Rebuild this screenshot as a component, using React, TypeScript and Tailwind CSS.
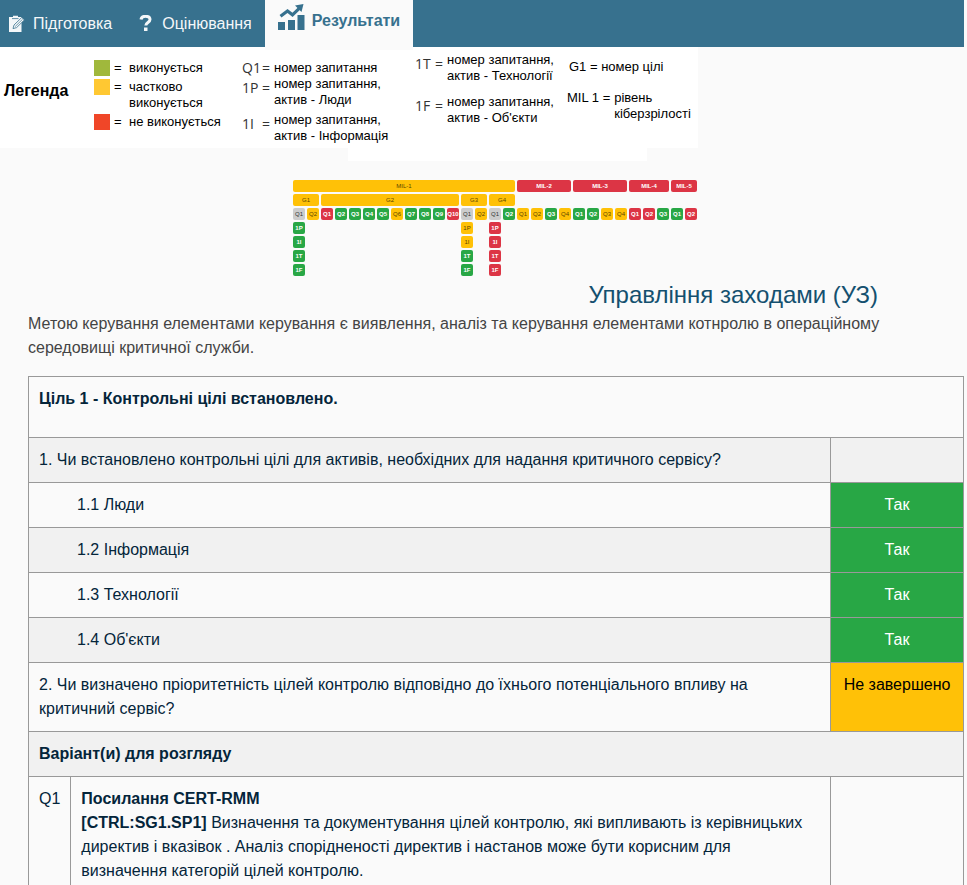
import { Fragment } from "react";

type Tone = "g" | "y" | "r" | "n";

const tones: Record<Tone, string> = {
  g: "bg-[#28a745] text-white font-bold",
  y: "bg-[#ffc107] text-[#5a4500]",
  r: "bg-[#dc3545] text-white font-bold",
  n: "bg-[#cccccc] text-[#333333]",
};

type Question = { label: string; tone: Tone; parts?: Tone[] };
type Level = { label: string; tone: Tone; goals: { label?: string; questions: Question[] }[] };

const parse = (tonesList: string): Question[] =>
  tonesList.split("").map((t, i) => ({ label: `Q${i + 1}`, tone: t as Tone }));

const withParts = (questions: Question[], parts: string): Question[] => [
  { ...questions[0], parts: parts.split("") as Tone[] },
  ...questions.slice(1),
];

const levels: Level[] = [
  {
    label: "MIL-1",
    tone: "y",
    goals: [
      { label: "G1", questions: withParts(parse("ny"), "gggg") },
      { label: "G2", questions: parse("rggggygggr") },
      { label: "G3", questions: withParts(parse("ny"), "yygg") },
      { label: "G4", questions: withParts(parse("ng"), "rrrr") },
    ],
  },
  { label: "MIL-2", tone: "r", goals: [{ questions: parse("yygy") }] },
  { label: "MIL-3", tone: "r", goals: [{ questions: parse("ggyy") }] },
  { label: "MIL-4", tone: "r", goals: [{ questions: parse("rrg") }] },
  { label: "MIL-5", tone: "r", goals: [{ questions: parse("gr") }] },
];

const partNames = ["1P", "1I", "1T", "1F"];

function Cell({ label, tone, wide = false }: { label: string; tone: Tone; wide?: boolean }) {
  return (
    <div
      className={`flex h-3 items-center justify-center overflow-hidden rounded-xs text-[6px] leading-none ${
        wide ? "w-full" : "w-3"
      } ${tones[tone]}`}
    >
      {label}
    </div>
  );
}

function HeatMap() {
  return (
    <div className="flex gap-0.5">
      {levels.map((level) => (
        <div key={level.label} className="flex flex-col gap-0.5">
          <Cell label={level.label} tone={level.tone} wide />
          <div className="flex gap-0.5">
            {level.goals.map((goal, i) => (
              <div key={i} className="flex flex-col gap-0.5">
                {goal.label ? <Cell label={goal.label} tone="y" wide /> : <div className="h-3" />}
                <div className="flex gap-0.5">
                  {goal.questions.map((q) => (
                    <div key={q.label} className="flex flex-col gap-0.5">
                      <Cell label={q.label} tone={q.tone} />
                      {q.parts?.map((t, p) => <Cell key={p} label={partNames[p]} tone={t} />)}
                    </div>
                  ))}
                </div>
              </div>
            ))}
          </div>
        </div>
      ))}
    </div>
  );
}

function ClipboardIcon() {
  return (
    <svg viewBox="0 0 17 18" className="h-[18px] w-[17px]" aria-hidden="true">
      <path d="M1 2h4V0.800h5V2h3.500v15H1z" fill="#f4f7f9" />
      <path d="M4 3.600h6.500" stroke="#37718e" strokeWidth="0.800" />
      <path d="M5 13.600l1-3.600 7.800-7.600 2.600 2.500-7.800 7.700z" fill="#f4f7f9" stroke="#37718e" strokeWidth="0.800" />
      <path d="M7.200 11.500l7.400-7.300" stroke="#37718e" strokeWidth="0.700" />
    </svg>
  );
}

function ChartIcon() {
  return (
    <svg viewBox="0 0 27 26" className="h-[26px] w-[27px]" aria-hidden="true">
      <path d="M0 18h7v8H0zM10 16h7v10h-7zM19.500 11h7v15h-7z" fill="#37718e" />
      <path d="M2.500 12.200L9.500 7l5 3.800 7-6.600" fill="none" stroke="#37718e" strokeWidth="3.200" />
      <path d="M25.500 0l-2 8-6.500-6.500z" fill="#37718e" />
    </svg>
  );
}

function NavBar() {
  return (
    <nav className="flex h-[47px] items-start bg-[#37718e] text-base text-[#f4f7f9]">
      <a href="#prepare" className="flex h-12 items-center gap-2 pl-2">
        <ClipboardIcon />
        Підготовка
      </a>
      <a href="#assess" className="flex h-12 items-center gap-2.5 pr-[13px] pl-[27px]">
        <svg viewBox="0 0 13 18" className="h-[18px] w-[13px]" aria-hidden="true">
          <path d="M2 4.500C2.300 2.300 4 1.300 6.500 1.300c2.700 0 4.500 1.200 4.500 3.300 0 3-4.200 2.900-4.200 6" fill="none" stroke="#f4f7f9" strokeWidth="3" />
          <path d="M5 12.500h3.500V16H5z" fill="#f4f7f9" />
        </svg>
        Оцінювання
      </a>
      <a
        href="#results"
        aria-current="page"
        className="flex h-[50px] items-start gap-[7px] bg-[#fafafa] px-[13px] pt-1 font-bold text-[#37718e]"
      >
        <ChartIcon />
        <span className="pt-[5px]">Результати</span>
      </a>
    </nav>
  );
}

function Swatches() {
  const rows = [
    { color: "bg-[#a0b83c]", text: "виконується" },
    { color: "bg-[#ffc832]", text: "частково виконується" },
    { color: "bg-[#f04628]", text: "не виконується" },
  ];
  return (
    <ul className="flex h-[101px] w-[148px] flex-col gap-[3px] pt-[13px]">
      {rows.map((r) => (
        <li key={r.text} className="flex items-start">
          <span className={`h-4 w-4 shrink-0 ${r.color}`} />
          <span className="w-[19px] shrink-0 pl-1">=</span>
          <span>{r.text}</span>
        </li>
      ))}
    </ul>
  );
}

function Term({ code, lines }: { code: string; lines: string[] }) {
  return (
    <div className="flex items-start">
      <dt
        className={`flex w-7 shrink-0 justify-between font-['Open_Sans',sans-serif] text-sm leading-4 text-[#333333] ${
          lines.length > 1 ? "pt-1" : ""
        }`}
      >
        <span>{code}</span>
        <span>=</span>
      </dt>
      <dd className="pl-1 whitespace-nowrap">
        {lines.map((l) => (
          <Fragment key={l}>
            {l}
            <br />
          </Fragment>
        ))}
      </dd>
    </div>
  );
}

function Legend() {
  return (
    <section className="flex w-[698px] bg-white text-[13px] leading-4 text-black">
      <h2 className="w-[94px] pt-[34px] pl-1 text-base leading-5 font-bold">Легенда</h2>
      <Swatches />
      <dl className="w-[173px] pt-[13px]">
        <Term code="Q1" lines={["номер запитання"]} />
        <Term code="1P" lines={["номер запитання,", "актив - Люди"]} />
        <div className="h-1" />
        <Term code="1I" lines={["номер запитання,", "актив - Інформація"]} />
      </dl>
      <dl className="flex w-[152px] flex-col gap-2.5 pt-[5px]">
        <Term code="1T" lines={["номер запитання,", "актив - Технології"]} />
        <Term code="1F" lines={["номер запитання,", "актив - Об'єкти"]} />
      </dl>
      <div className="pt-3 whitespace-nowrap">
        <p className="pl-0.5">G1 = номер цілі</p>
        <div className="flex gap-1 pt-[15px]">
          <span>MIL 1 =</span>
          <span>
            рівень
            <br />
            кіберзрілості
          </span>
        </div>
      </div>
    </section>
  );
}

const cell = "border border-[#999999] px-2.5 py-2.5 align-top";

function ResultsTable() {
  return (
    <table className="w-full border-collapse text-left text-[#04253a]">
      <colgroup>
        <col className="w-[42px]" />
        <col />
        <col className="w-[133px]" />
      </colgroup>
      <tbody>
        <tr>
          <th colSpan={3} className={`${cell} pb-[26px] font-bold`}>
            Ціль 1 - Контрольні цілі встановлено.
          </th>
        </tr>
        <tr className="bg-[#f1f1f1]">
          <td colSpan={2} className={cell}>
            1. Чи встановлено контрольні цілі для активів, необхідних для надання критичного сервісу?
          </td>
          <td className={cell} />
        </tr>
        {["1.1 Люди", "1.2 Інформація", "1.3 Технології", "1.4 Об'єкти"].map((name) => (
          <tr key={name} className="even:bg-[#f1f1f1]">
            <td colSpan={2} className={cell}>
              <span className="pl-[38px]">{name}</span>
            </td>
            <td className={`${cell} bg-[#28a745] text-center text-white`}>Так</td>
          </tr>
        ))}
        <tr>
          <td colSpan={2} className={cell}>
            2. Чи визначено пріоритетність цілей контролю відповідно до їхнього потенціального впливу на критичний
            сервіс?
          </td>
          <td className={`${cell} bg-[#ffc107] text-center whitespace-nowrap text-black`}>Не завершено</td>
        </tr>
        <tr className="bg-[#f1f1f1]">
          <th colSpan={3} className={`${cell} font-bold`}>
            Варіант(и) для розгляду
          </th>
        </tr>
        <tr>
          <td className={cell}>Q1</td>
          <td className={cell}>
            <strong>Посилання CERT-RMM</strong>
            <br />
            <strong>[CTRL:SG1.SP1]</strong> Визначення та документування цілей контролю, які випливають із керівницьких
            директив і вказівок . Аналіз спорідненості директив і настанов може бути корисним для визначення категорій
            цілей контролю.
          </td>
          <td className={cell} />
        </tr>
      </tbody>
    </table>
  );
}

export default function App() {
  return (
    <div className="h-screen overflow-hidden bg-[#fafafa] pr-[3px] font-['Liberation_Sans',Arial,sans-serif] text-base leading-6">
      <NavBar />
      <Legend />
      <div className="ml-[348px] h-[13px] w-[299px] bg-white" />
      <main className="pl-7">
        <div className="pt-[19px] pl-[265px]">
          <HeatMap />
        </div>
        <h1 className="pt-[3px] pr-[86px] pb-px text-right text-2xl leading-8 text-[#14506f]">
          Управління заходами (УЗ)
        </h1>
        <p className="pr-12 pb-4 text-[#444444]">
          Метою керування елементами керування є виявлення, аналіз та керування елементами котнролю в операційному
          середовищі критичної служби.
        </p>
        <ResultsTable />
      </main>
    </div>
  );
}
